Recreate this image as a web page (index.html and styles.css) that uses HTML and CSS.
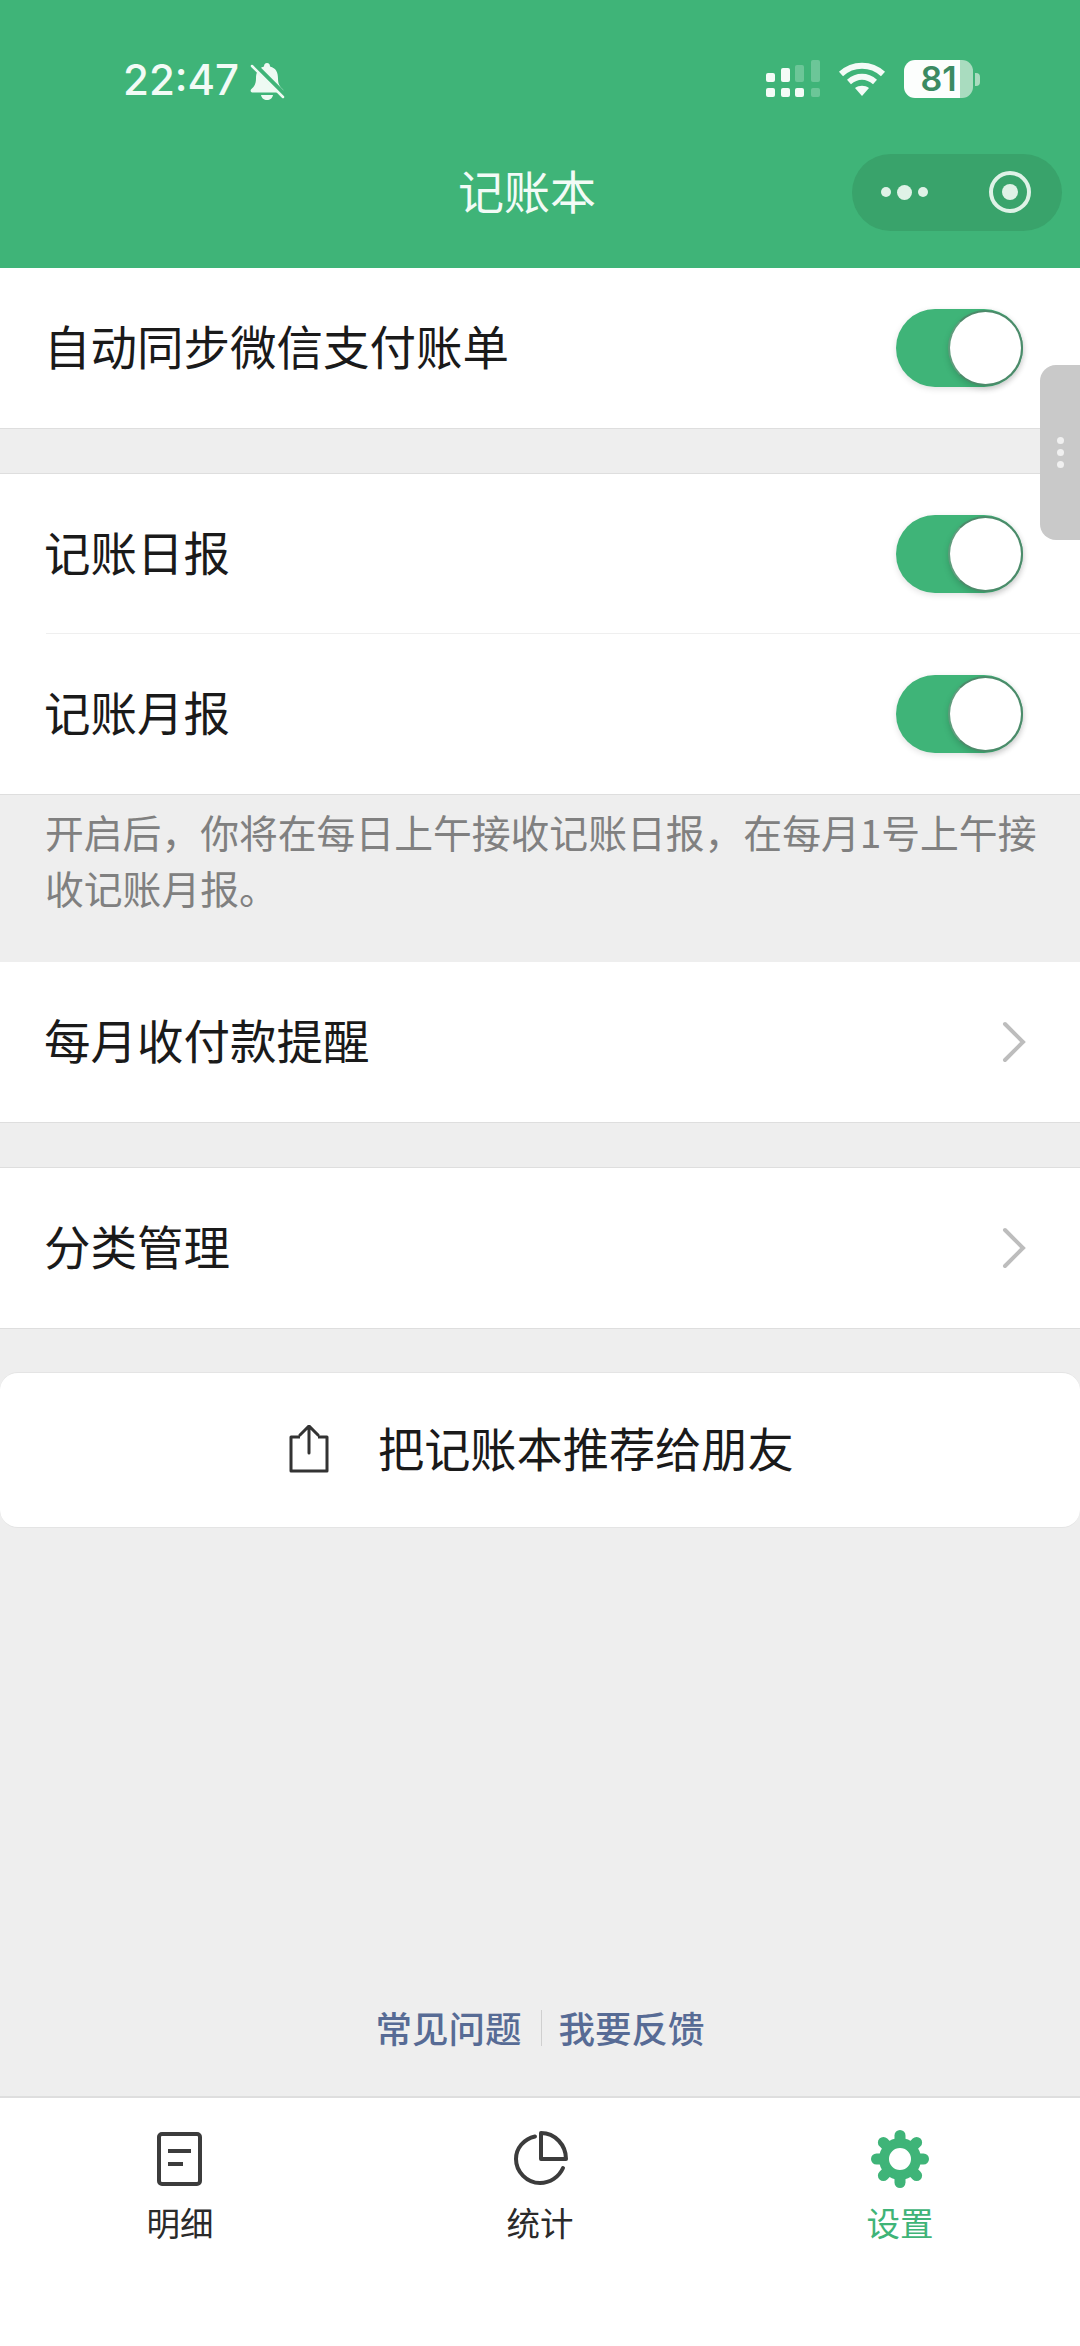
FILE: index.html
```html
<!DOCTYPE html>
<html>
<head>
    <title>记账本</title>
    <link rel="stylesheet" href="styles.css">
</head>
<body>
    <div class="page">
        <header class="header">
            <div class="status">
                <div class="status-left">
                    <span class="time">22:47</span>
                    <svg class="bell" width="36" height="38" viewBox="0 0 36 38">
                        <path fill="#eefaf3" d="M18 1c2 0 3 1.500 3 3.500 6 1.500 8 6 8 12 0 5 1.500 8 5 11 1 1.500 0 3-2 3H4c-2 0-3-1.500-2-3 3.500-3 5-6 5-11 0-6 2-10.500 8-12C15 2.500 16 1 18 1z"/>
                        <path fill="#eefaf3" d="M12 33h12c-.5 3-3 5-6 5s-5.500-2-6-5z"/>
                        <path stroke="#3fb478" stroke-width="6" d="M2 0l34 34"/>
                        <path stroke="#eefaf3" stroke-width="2.500" stroke-linecap="round" d="M3 4l31 31"/>
                    </svg>
                </div>
                <div class="status-right">
                    <svg class="signal" width="54" height="38" viewBox="0 0 54 38">
                        <g fill="#f4fbf7">
                            <rect x="0" y="13" width="9" height="9" rx="2"/>
                            <rect x="15" y="8" width="9" height="14" rx="2"/>
                            <rect x="0" y="28" width="9" height="9" rx="2"/>
                            <rect x="15" y="28" width="9" height="9" rx="2"/>
                            <rect x="29" y="28" width="9" height="9" rx="2"/>
                        </g>
                        <g fill="#f4fbf7" opacity="0.25">
                            <rect x="29" y="5" width="9" height="17" rx="2"/>
                            <rect x="45" y="0" width="9" height="22" rx="2"/>
                            <rect x="45" y="28" width="9" height="9" rx="2"/>
                        </g>
                    </svg>
                    <svg class="wifi" width="48" height="34" viewBox="0 0 48 34">
                        <g fill="none" stroke="#f4fbf7" stroke-width="6">
                            <path d="M3 12c12-11 30-11 42 0"/>
                            <path d="M11 20c8-7 18-7 26 0"/>
                        </g>
                        <path fill="#f4fbf7" d="M24 34l-7-8c4-3 10-3 14 0z"/>
                    </svg>
                    <div class="battery"><span class="battery-text">81</span></div>
                    <span class="battery-nub"></span>
                </div>
            </div>
            <div class="nav">
                <span class="nav-title">记账本</span>
                <div class="capsule">
                    <div class="capsule-dots">
                        <span class="dot"></span>
                        <span class="dot dot-big"></span>
                        <span class="dot"></span>
                    </div>
                    <div class="capsule-ring"><span class="ring-dot"></span></div>
                </div>
            </div>
        </header>

        <main class="main">
            <section class="group">
                <div class="row">
                    <span class="row-text">自动同步微信支付账单</span>
                    <div class="switch"><span class="knob"></span></div>
                </div>
            </section>

            <section class="group group-gap">
                <div class="row row-line">
                    <span class="row-text">记账日报</span>
                    <div class="switch"><span class="knob"></span></div>
                </div>
                <div class="row">
                    <span class="row-text">记账月报</span>
                    <div class="switch"><span class="knob"></span></div>
                </div>
            </section>
            <p class="note">开启后，你将在每日上午接收记账日报，在每月1号上午接收记账月报。</p>

            <section class="group">
                <div class="row">
                    <span class="row-text">每月收付款提醒</span>
                    <svg class="chevron" width="24" height="42" viewBox="0 0 24 42">
                        <path fill="none" stroke="#bdbdbd" stroke-width="4" stroke-linecap="round" d="M3 3l18 18L3 39"/>
                    </svg>
                </div>
            </section>

            <section class="group group-gap">
                <div class="row">
                    <span class="row-text">分类管理</span>
                    <svg class="chevron" width="24" height="42" viewBox="0 0 24 42">
                        <path fill="none" stroke="#bdbdbd" stroke-width="4" stroke-linecap="round" d="M3 3l18 18L3 39"/>
                    </svg>
                </div>
            </section>

            <section class="share">
                <svg class="share-icon" width="40" height="48" viewBox="0 0 40 48">
                    <g fill="none" stroke="#333" stroke-width="3" stroke-linejoin="round">
                        <path d="M11 12H2v34h36V12h-9"/>
                        <path stroke-linecap="round" d="M20 28V2M11 10l9-9 9 9"/>
                    </g>
                </svg>
                <span class="row-text share-text">把记账本推荐给朋友</span>
            </section>

            <div class="links">
                <span class="link">常见问题</span>
                <span class="link-sep"></span>
                <span class="link">我要反馈</span>
            </div>
        </main>

        <nav class="tabbar">
            <div class="tab">
                <svg width="58" height="58" viewBox="0 0 58 58">
                    <g fill="none" stroke="#3c3c3c" stroke-width="4">
                        <rect x="8" y="4" width="41" height="50" rx="3"/>
                        <path d="M17 21h23M17 34h15"/>
                    </g>
                </svg>
                <span class="tab-label">明细</span>
            </div>
            <div class="tab">
                <svg width="58" height="58" viewBox="0 0 58 58">
                    <g fill="none" stroke="#3c3c3c" stroke-width="4">
                        <path stroke-linecap="round" d="M24 6.500C13 9 5 18 5 29c0 13 11 24 24 24 10 0 19-6 23-15"/>
                        <path stroke-linejoin="round" d="M30 3v26h25C55 15 44 3 30 3z"/>
                    </g>
                </svg>
                <span class="tab-label">统计</span>
            </div>
            <div class="tab tab-active">
                <svg width="58" height="58" viewBox="-29 -29 58 58">
                    <circle r="16" fill="none" stroke="#3fb478" stroke-width="10"/>
                    <g stroke="#3fb478" stroke-width="11" stroke-linecap="round">
                        <path d="M0-19v-4.500"/>
                        <path d="M0-19v-4.500" transform="rotate(45)"/>
                        <path d="M0-19v-4.500" transform="rotate(90)"/>
                        <path d="M0-19v-4.500" transform="rotate(135)"/>
                        <path d="M0-19v-4.500" transform="rotate(180)"/>
                        <path d="M0-19v-4.500" transform="rotate(225)"/>
                        <path d="M0-19v-4.500" transform="rotate(270)"/>
                        <path d="M0-19v-4.500" transform="rotate(315)"/>
                    </g>
                </svg>
                <span class="tab-label">设置</span>
            </div>
        </nav>

        <div class="side-tab">
            <span class="side-dot"></span>
            <span class="side-dot"></span>
            <span class="side-dot"></span>
        </div>
    </div>
</body>
</html>
```

FILE: styles.css
```css
* {
    box-sizing: border-box;
}
body {
    margin: 0;
    font-family: "Noto Sans CJK SC", "Noto Sans", sans-serif;
    color: #1a1a1a;
}
.page {
    position: relative;
    width: 1080px;
    height: 2346px;
    overflow: hidden;
    display: flex;
    flex-direction: column;
    background-color: #eeeeee;
}

/* header */
.header {
    height: 268px;
    flex-shrink: 0;
    background-color: #3fb478;
    color: #f2fbf6;
}
.status {
    height: 120px;
    padding: 60px 100px 0 123px;
    display: flex;
    justify-content: space-between;
    align-items: flex-start;
}
.status-left {
    display: flex;
    align-items: center;
    gap: 10px;
    height: 40px;
}
.time {
    font-family: Inter, sans-serif;
    font-size: 42px;
    line-height: 40px;
    font-weight: 500;
}
.bell {
    margin-top: 2px;
}
.status-right {
    display: flex;
    align-items: flex-start;
}
.signal {
    margin-left: 0;
}
.wifi {
    margin: 2px 0 0 18px;
}
.battery {
    width: 69px;
    height: 38px;
    margin-left: 18px;
    border-radius: 11px;
    background: linear-gradient(to right, #fcfefd 0, #fcfefd 56px, #a9dcbf 56px);
    display: flex;
    align-items: center;
    justify-content: center;
}
.battery-text {
    font-family: Inter, sans-serif;
    font-size: 34px;
    line-height: 38px;
    font-weight: 600;
    color: #3b8a62;
}
.battery-nub {
    width: 5px;
    height: 13px;
    margin: 13px 0 0 2px;
    border-radius: 0 4px 4px 0;
    background-color: #a9dcbf;
}
.nav {
    height: 144px;
    padding: 0 18px 0 458px;
    display: flex;
    justify-content: space-between;
    align-items: center;
}
.nav-title {
    font-size: 46px;
    line-height: 64px;
    padding-bottom: 6px;
    box-sizing: content-box;
}
.capsule {
    width: 210px;
    height: 77px;
    border-radius: 39px;
    background-color: #39a36b;
    display: flex;
    align-items: center;
    padding: 0 31px 0 29px;
    justify-content: space-between;
}
.capsule-dots {
    display: flex;
    align-items: center;
    gap: 6px;
}
.dot {
    width: 10px;
    height: 10px;
    border-radius: 50%;
    background-color: #dff2e7;
}
.dot-big {
    width: 15px;
    height: 15px;
}
.capsule-ring {
    width: 42px;
    height: 42px;
    border: 4px solid #dff2e7;
    border-radius: 50%;
    display: flex;
    align-items: center;
    justify-content: center;
}
.ring-dot {
    width: 16px;
    height: 16px;
    border-radius: 50%;
    background-color: #dff2e7;
}

/* list */
.main {
    flex: 1;
    display: flex;
    flex-direction: column;
}
.group {
    background-color: #fff;
    border-bottom: 1px solid #dedede;
}
.group-gap {
    margin-top: 44px;
    border-top: 1px solid #dedede;
}
.row {
    height: 160px;
    margin-left: 46px;
    padding-right: 57px;
    display: flex;
    justify-content: space-between;
    align-items: center;
}
.row-line {
    border-bottom: 1px solid #efefef;
}
.row-text {
    margin-left: -2px;
    font-size: 46.500px;
    line-height: 64px;
    padding-bottom: 6px;
    box-sizing: content-box;
}
.share-text {
    margin-left: 0;
    font-size: 46.200px;
}
.switch {
    width: 127px;
    height: 78px;
    border-radius: 39px;
    background-color: #3fb478;
    display: flex;
    align-items: center;
    justify-content: flex-end;
    box-shadow: 0 2px 6px rgba(0, 0, 0, 0.12);
}
.knob {
    width: 75px;
    height: 76px;
    border-radius: 50%;
    background-color: #fff;
    border: 2px solid #4c8a6a;
    border-left-color: #5f9c7c;
    box-shadow: 0 3px 6px rgba(0, 0, 0, 0.15);
}
.chevron {
    margin-right: -3px;
}
.note {
    margin: 0;
    padding: 8px 26px 47px 45px;
    font-size: 38.800px;
    line-height: 56px;
    color: #808080;
}
.share {
    height: 156px;
    margin-top: 43px;
    background-color: #fff;
    border-radius: 18px;
    border-top: 1px solid #e4e4e4;
    border-bottom: 1px solid #e4e4e4;
    padding-left: 289px;
    display: flex;
    align-items: center;
    gap: 49px;
}
.share-icon {
    margin-bottom: 3px;
}
.links {
    margin-top: auto;
    padding-bottom: 40px;
    display: flex;
    justify-content: center;
    align-items: center;
    gap: 17px;
}
.link {
    font-size: 36.500px;
    line-height: 56px;
    font-weight: 500;
    color: #576b95;
}
.link-sep {
    width: 1px;
    height: 36px;
    margin-left: 2px;
    background-color: #cfcfcf;
}

/* tabs */
.tabbar {
    height: 250px;
    flex-shrink: 0;
    background-color: #fff;
    border-top: 2px solid #dedede;
    padding-top: 32px;
    display: grid;
    grid-template-columns: repeat(3, 1fr);
}
.tab {
    display: flex;
    flex-direction: column;
    align-items: center;
}
.tab-label {
    margin-top: 11px;
    font-size: 33.500px;
    line-height: 46px;
    color: #2a2a2a;
}
.tab-active .tab-label {
    color: #3fb478;
}

/* floating handle on the right edge */
.side-tab {
    position: absolute;
    top: 365px;
    right: 0;
    width: 40px;
    height: 175px;
    border-radius: 16px 0 0 16px;
    background-color: #c9c9c9;
    display: flex;
    flex-direction: column;
    align-items: center;
    justify-content: center;
    gap: 5px;
}
.side-dot {
    width: 7px;
    height: 7px;
    border-radius: 50%;
    background-color: #f0f0f0;
}
```
